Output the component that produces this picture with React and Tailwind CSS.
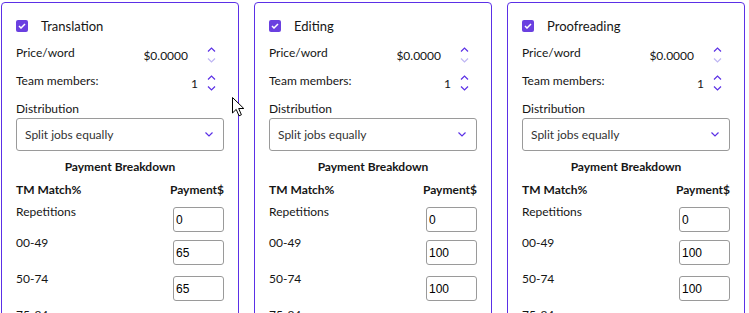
import React from 'react'

const cards = [
    {title: 'Translation', rows: ['0', '65', '65', '']},
    {title: 'Editing', rows: ['0', '100', '100', '']},
    {title: 'Proofreading', rows: ['0', '100', '100', '']},
]

const labels = ['Repetitions', '00-49', '50-74', '75-84']
const rowGaps = ['mt-0', 'mt-[3px]', 'mt-[6px]', 'mt-[6px]']
const inputGaps = ['mt-[3px]', 'mt-[5px]', 'mt-[5px]', 'mt-[6px]']

function Chevron({up, light}) {
    return (
        <svg width="9" height="5" viewBox="0 0 9 5" fill="none">
            <path
                d={up ? 'M1 4.5 L4.5 1 L8 4.5' : 'M1 0.5 L4.5 4 L8 0.5'}
                stroke={light ? '#bfb6f3' : '#5b30e6'}
                strokeWidth="1.2"
            />
        </svg>
    )
}

// gap is passed as a full class so tailwind picks it up
function Spinner({lightDown, gap}) {
    return (
        <div className={`flex flex-col items-center justify-between h-[16px] mr-[8px] ${gap}`}>
            <Chevron up />
            <Chevron light={lightDown} />
        </div>
    )
}

function Card({title, rows}) {
    return (
        <div className="w-[238px] shrink-0 h-[330px] border border-[#5b30e6] rounded-[4px] px-[14px] pt-[17px] text-[#161616]">
            <div className="flex items-center h-[12px]">
                <div className="w-[12px] h-[12px] rounded-[2px] bg-[#6a40e0] flex items-center justify-center">
                    <svg width="8" height="6" viewBox="0 0 8 6" fill="none">
                        <path d="M1 3 L3 5 L7 1" stroke="white" strokeWidth="1.5" />
                    </svg>
                </div>
                <span className="ml-[13px] text-[13px] leading-[16px]">{title}</span>
            </div>

            <div className="flex items-start justify-between h-[16px] mt-[15px]">
                <span className="text-[12px] leading-[16px] -mt-[2px]">Price/word</span>
                <div className="flex items-center h-[16px]">
                    <span className="text-[12px] leading-[16px] mt-[1px]">$0.0000</span>
                    <Spinner lightDown gap="ml-[19px]" />
                </div>
            </div>

            <div className="flex items-start justify-between h-[16px] mt-[12px]">
                <span className="text-[12px] leading-[16px] -mt-[2px]">Team members:</span>
                <div className="flex items-center h-[16px]">
                    <span className="text-[12px] leading-[16px] mt-[1px]">1</span>
                    <Spinner gap="ml-[9px]" />
                </div>
            </div>

            <div className="text-[12px] leading-[16px] mt-[10px]">Distribution</div>
            <div className="mt-[1px] h-[33px] border border-[#9a9a9a] rounded-[3px] flex items-center justify-between pl-[8px] pr-[10px]">
                <span className="text-[12px] text-[#333]">Split jobs equally</span>
                <svg width="8" height="5" viewBox="0 0 8 5" fill="none">
                    <path d="M0.5 0.5 L4 4 L7.5 0.5" stroke="#5b30e6" strokeWidth="1.2" />
                </svg>
            </div>

            <div className="mt-[8px] text-center text-[12px] leading-[16px] font-bold">Payment Breakdown</div>
            <div className="mt-[7px] flex justify-between text-[12px] leading-[16px] font-bold">
                <span>TM Match%</span>
                <span>Payment$</span>
            </div>

            <div className="mt-[6px]">
                {labels.map((label, i) => (
                    <div key={label} className={`flex items-start justify-between ${rowGaps[i]}`}>
                        <span className="text-[12px] leading-[16px]">{label}</span>
                        <input
                            readOnly
                            value={rows[i]}
                            className={`w-[51px] h-[25px] border border-[#9a9a9a] rounded-[3px] pl-[2px] text-[12px] text-black font-['Liberation_Sans',sans-serif] outline-none ${inputGaps[i]}`}
                        />
                    </div>
                ))}
            </div>
        </div>
    )
}

export default function App() {
    return (
        <div className="relative w-[749px] h-[313px] overflow-hidden bg-white font-['Lato',sans-serif]">
            <div className="flex gap-[15px] pl-px pt-[2px]">
                {cards.map((c) => (
                    <Card key={c.title} title={c.title} rows={c.rows} />
                ))}
            </div>
            <svg className="absolute left-[232px] top-[97px]" width="13" height="20" viewBox="0 0 13 20">
                <path d="M0.5 0.5 L0.5 16 L4.2 12.4 L7 18.8 L9.4 17.8 L6.7 11.5 L11.8 11.5 Z" fill="white" stroke="black" strokeWidth="1" />
            </svg>
        </div>
    )
}
